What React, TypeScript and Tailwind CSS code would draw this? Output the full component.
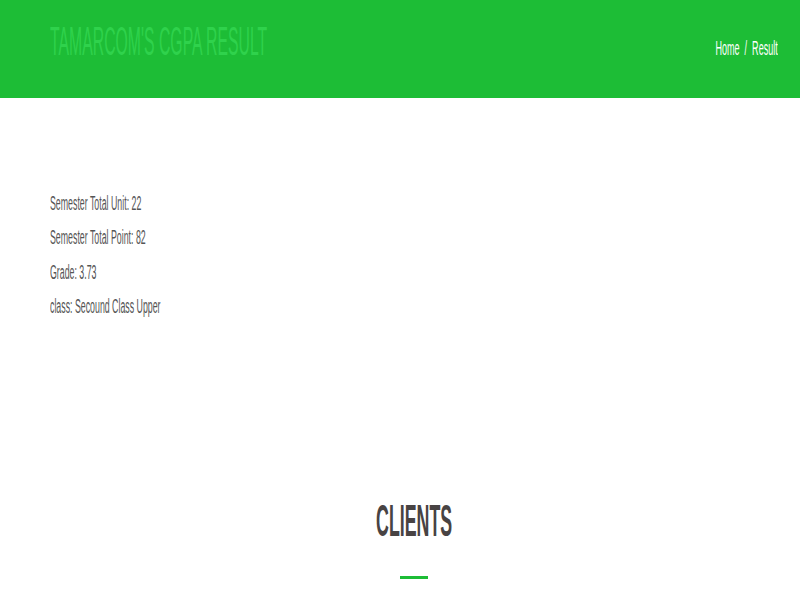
export default function App() {
    const lines = [
        "Semester Total Unit: 22",
        "Semester Total Point: 82",
        "Grade: 3.73",
        "class: Secound Class Upper",
    ];

    return (
        <div
            className="w-full h-[600px] overflow-hidden bg-white"
            style={{ fontFamily: '"Liberation Sans", Arial, sans-serif' }}
        >
            <header className="h-[98px] bg-[#1dbd36] flex justify-between items-start pl-[50px] pr-[22px]">
                <h1 className="pt-[21px] text-[40px] leading-none font-normal text-[#2fd24c] whitespace-nowrap">
                    <span className="inline-block origin-left scale-x-[0.395]">
                        TAMARCOM'S CGPA RESULT
                    </span>
                </h1>
                <nav className="pt-[37px] text-[21px] leading-none text-white whitespace-nowrap">
                    <span className="inline-block origin-right scale-x-[0.43]">
                        Home&nbsp;&nbsp;/&nbsp;&nbsp;Result
                    </span>
                </nav>
            </header>

            <section className="pt-[88px] pl-[50px] text-[20px] leading-[34.33px] text-[#555]">
                {lines.map((l) => (
                    <div key={l} className="whitespace-nowrap">
                        <span className="inline-block origin-left scale-x-[0.44]">{l}</span>
                    </div>
                ))}
            </section>

            <section className="pt-[176px] pl-[28px] flex flex-col items-center">
                <h2 className="text-[44px] leading-none font-bold text-[#484343] whitespace-nowrap">
                    <span className="inline-block origin-center scale-x-[0.404]">CLIENTS</span>
                </h2>
                <div className="mt-[33px] w-[28px] h-[3px] bg-[#1dbd36]"></div>
            </section>
        </div>
    );
}
